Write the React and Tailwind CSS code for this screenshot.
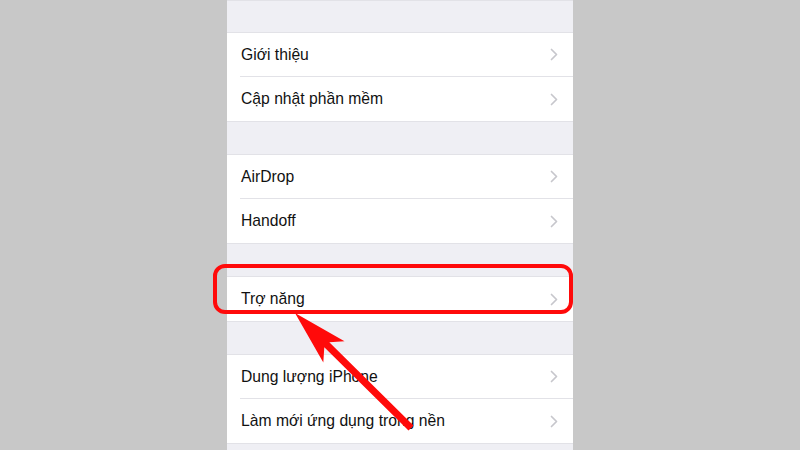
import React from 'react';

const groups = [
  ['Giới thiệu', 'Cập nhật phần mềm'],
  ['AirDrop', 'Handoff'],
  ['Trợ năng'],
  ['Dung lượng iPhone', 'Làm mới ứng dụng trong nền'],
];

const Chevron = () => (
  <svg width="8" height="13" viewBox="0 0 8 13" fill="none">
    <path d="M1.5 1.5 L6.5 6.5 L1.5 11.5" stroke="#c7c7cc" strokeWidth="1.7" strokeLinecap="round" strokeLinejoin="round" />
  </svg>
);

const Row = ({ label, last }) => (
  <div className="pl-[13px]">
    <div className={`h-[44px] flex items-center justify-between pl-[1px] pr-[15px] ${last ? '' : 'border-b border-[#e2e2e7]'}`}>
      <span className="text-[15.7px] text-[#111]">{label}</span>
      <Chevron />
    </div>
  </div>
);

export default function App() {
  return (
    <div className="relative w-[800px] h-[450px] overflow-hidden bg-[#c8c8c8] flex justify-center font-['Liberation_Sans',sans-serif]">
      <div className="w-[346px] h-full bg-[#efeff4] border-t border-[#e2e2e7]">
        {groups.map((rows, gi) => (
          <div key={gi} className={`${gi === 0 ? 'mt-[31px]' : 'mt-[32px]'} bg-white border-y border-[#e2e2e7]`}>
            {rows.map((label, ri) => (
              <Row key={label} label={label} last={ri === rows.length - 1} />
            ))}
          </div>
        ))}
      </div>

      {/* highlight box around the accessibility row */}
      <div className="absolute left-[213px] top-[264px] w-[360px] h-[50px] border-[4px] border-[#ff0a0a] rounded-[12px]" />

      {/* pointer arrow */}
      <svg className="absolute left-0 top-0" width="800" height="450" viewBox="0 0 800 450">
        <polygon
          points="295,313 344.5,341.3 329.3,342.3 413.5,425.5 408.5,430.5 324.3,347.3 323.3,362.5"
          fill="#ff0a0a"
        />
      </svg>
    </div>
  );
}
